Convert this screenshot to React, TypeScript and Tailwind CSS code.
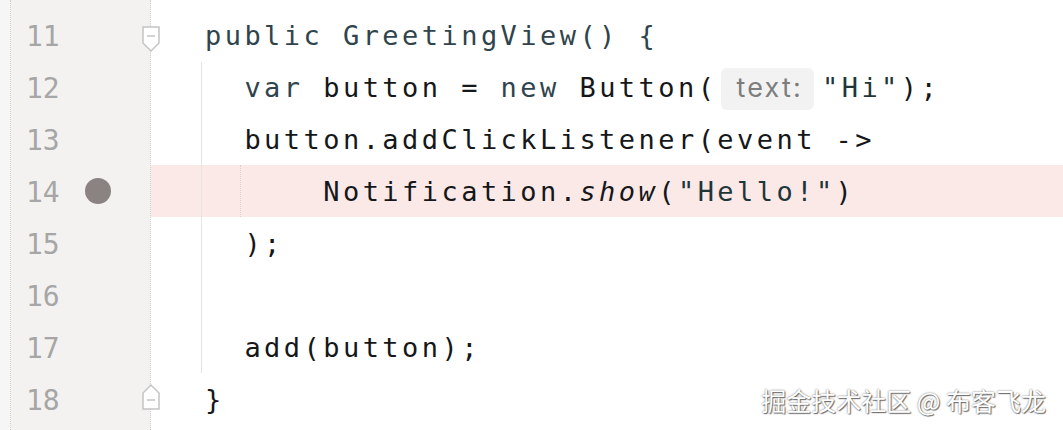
import React from 'react';

const mono = "font-['DejaVu_Sans_Mono','Liberation_Mono',monospace]";

const kw = 'text-[#2f444c]';
const str = 'text-[#1f3639]';
const plain = 'text-[#151719]';

type Line = { n: number; body: React.ReactNode; hl?: boolean; bp?: boolean };

const lines: Line[] = [
  {
    n: 11,
    body: (
      <span className={kw}>public GreetingView() {'{'}</span>
    ),
  },
  {
    n: 12,
    body: (
      <>
        <span className={kw}>{'  var '}</span>
        <span className={plain}>button = </span>
        <span className={kw}>new </span>
        <span className={plain}>Button(</span>
        <span className="inline-flex items-center h-[42px] pl-[15px] pr-[11px] ml-[4px] mr-[8px] rounded-md bg-[#f2f2f2] text-[#7d7d7d] font-['Inter','Noto_Sans',sans-serif] text-[27px] tracking-[2.2px]">
          text:
        </span>
        <span className={str}>"Hi"</span>
        <span className={plain}>);</span>
      </>
    ),
  },
  { n: 13, body: <span className={plain}>{'  button.addClickListener(event ->'}</span> },
  {
    n: 14,
    hl: true,
    bp: true,
    body: (
      <>
        <span className={plain}>{'      Notification.'}</span>
        <span className={`${plain} italic`}>show</span>
        <span className={plain}>(</span>
        <span className={str}>"Hello!"</span>
        <span className={plain}>)</span>
      </>
    ),
  },
  { n: 15, body: <span className={plain}>{'  );'}</span> },
  { n: 16, body: null },
  { n: 17, body: <span className={plain}>{'  add(button);'}</span> },
  { n: 18, body: <span className={plain}>{'}'}</span> },
];

function FoldMarker({ up }: { up?: boolean }) {
  return (
    <svg width="20" height="28" viewBox="0 0 20 28" fill="none">
      {up ? (
        <>
          <path d="M2 26 H18 V10 L10 2 L2 10 Z" fill="#ffffff" stroke="#c4c4c4" strokeWidth="1.5" />
          <path d="M6 17 H14" stroke="#c4c4c4" strokeWidth="1.5" />
        </>
      ) : (
        <>
          <path d="M2 2 H18 V18 L10 26 L2 18 Z" fill="#ffffff" stroke="#c4c4c4" strokeWidth="1.5" />
          <path d="M6 11 H14" stroke="#c4c4c4" strokeWidth="1.5" />
        </>
      )}
    </svg>
  );
}

export default function App() {
  return (
    <div className="relative w-[1063px] h-[430px] overflow-hidden bg-white flex">
      {/* Gutter */}
      <div className="w-[11px] h-full bg-[#f6f6f6] border-r border-dotted border-[#cfcfcf]" />
      <div className="relative w-[140px] h-full bg-[#f3f2f1] border-r border-dotted border-[#d2d2d2] pt-[9px]">
        {lines.map((l) => (
          <div key={l.n} className="h-[52px] flex items-center pl-[15px] pt-[4px]">
            <span className={`${mono} w-[59px] text-[28px] leading-none text-[#a6a6a6]`}>{l.n}</span>
            {l.bp && <span className="w-[26px] h-[26px] -mt-[4px] rounded-full bg-[#8b8282]" />}
          </div>
        ))}
        <div className="absolute right-[-11px] top-[25px]">
          <FoldMarker />
        </div>
        <div className="absolute right-[-11px] top-[383px]">
          <FoldMarker up />
        </div>
      </div>

      {/* Code */}
      <div className="relative flex-1 h-full pt-[9px]">
        {lines.map((l) => (
          <div
            key={l.n}
            className={`h-[52px] flex items-center pl-[54px] pt-[3px] whitespace-pre ${mono} text-[27px] tracking-[3.45px] ${
              l.hl ? 'bg-[#fbe9e7]' : ''
            }`}
          >
            {l.body}
          </div>
        ))}
        {/* indent guides */}
        <div className="absolute left-[50px] top-[62px] h-[311px] border-l border-[#e4e4e4]" />
        <div className="absolute left-[89px] top-[165px] h-[52px] border-l border-dotted border-[#dcd0ce]" />
      </div>

      {/* watermark */}
      <div className="absolute right-[17px] top-[382px] text-[25px] text-white font-['Noto_Sans_CJK_SC',sans-serif] [text-shadow:0_0_2px_#6b6b6b,1px_1px_1px_#6b6b6b]">
        掘金技术社区 @ 布客飞龙
      </div>
    </div>
  );
}
